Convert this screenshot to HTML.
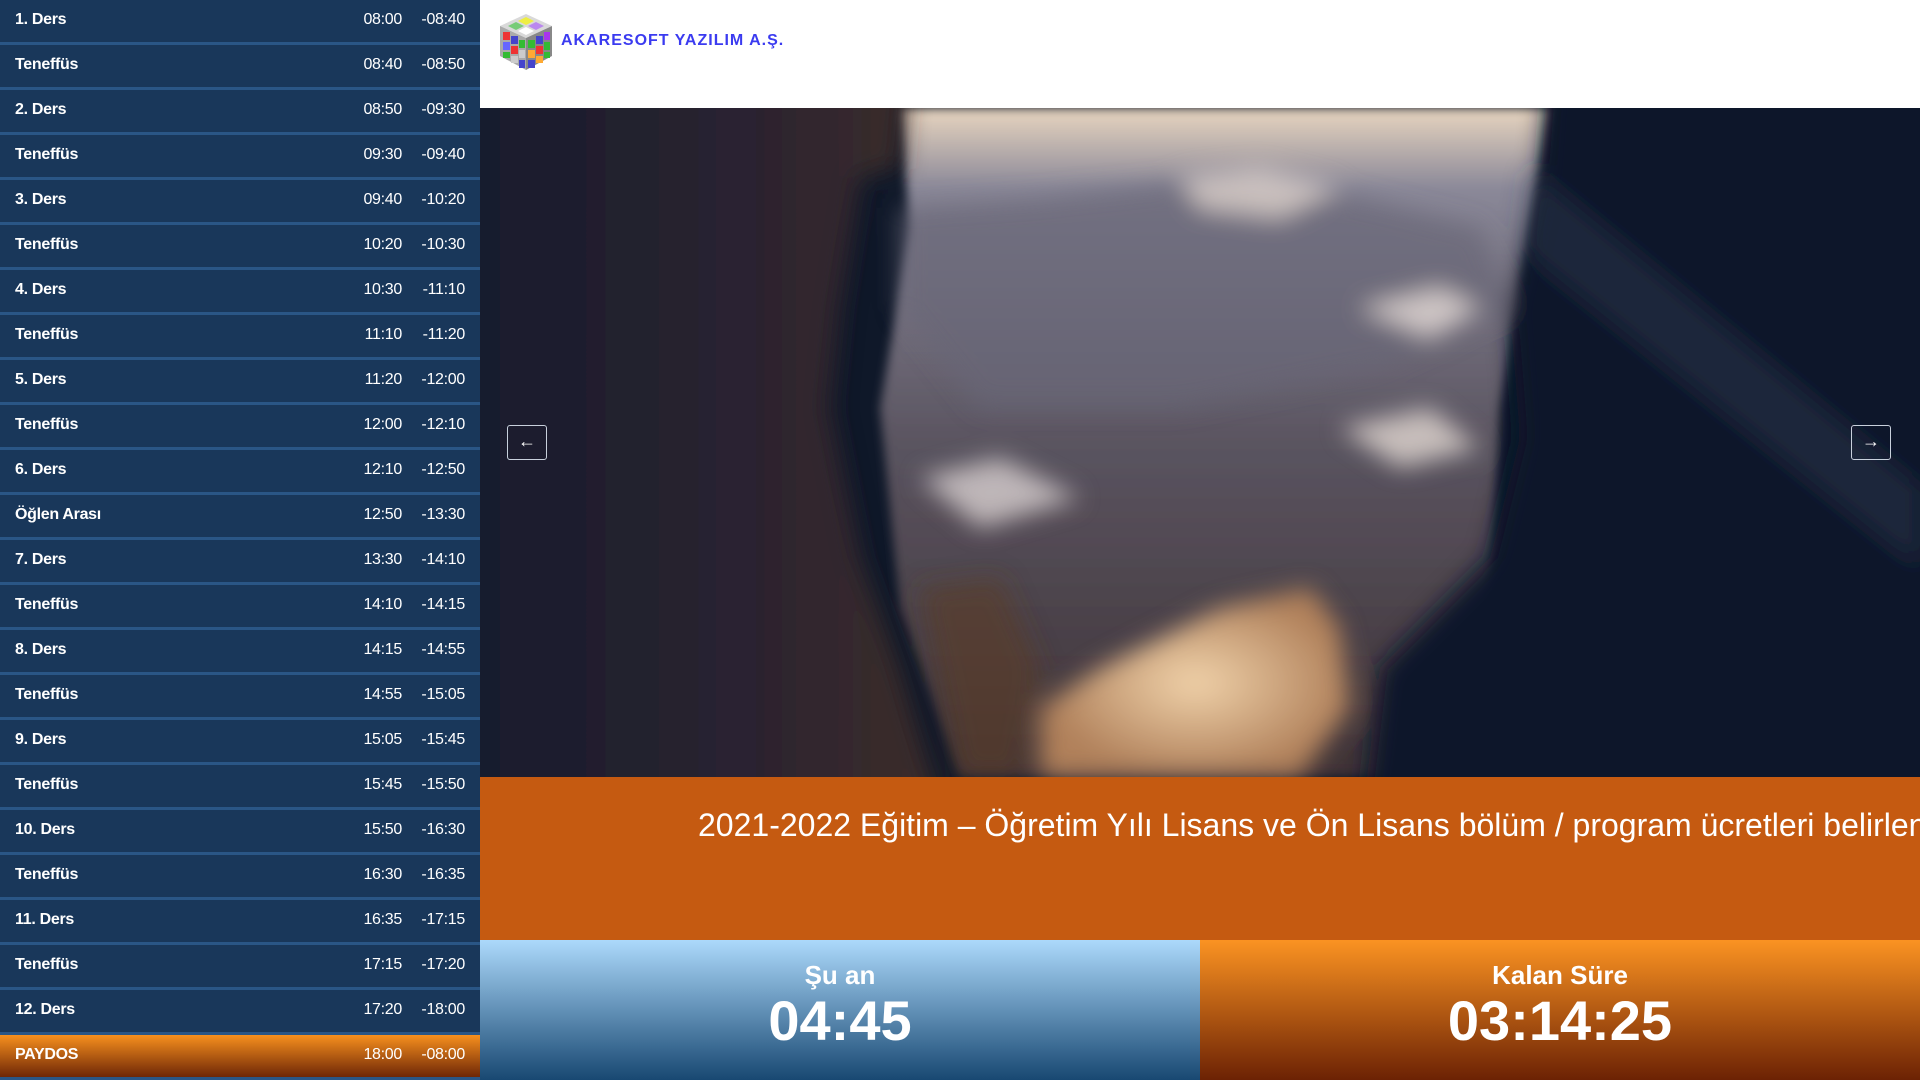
<!DOCTYPE html>
<html><head><meta charset="utf-8"><style>
*{margin:0;padding:0;box-sizing:border-box}
html,body{width:1920px;height:1080px;overflow:hidden;font-family:"Liberation Sans",Arial,sans-serif;background:#fff}
#side{position:absolute;left:0;top:0;width:480px;height:1080px;background:#2a5686}
.row{position:absolute;left:0;width:480px;height:42px;background:#19375a;color:#fff;font-size:16px;letter-spacing:-0.3px}
.row b{position:absolute;left:15px;top:11px}
.row .t1{position:absolute;right:78px;top:11px}
.row .t2{position:absolute;right:15px;top:11px}
.row.p{background:linear-gradient(#f7901e,#6e2606)}
#hdr{position:absolute;left:480px;top:0;width:1440px;height:108px;background:#fff}
#img{position:absolute;left:480px;top:108px;width:1440px;height:669px;overflow:hidden;background:#101a2c}
#band{position:absolute;left:480px;top:777px;width:1440px;height:163px;background:#c55a11;overflow:hidden}
#band span{position:absolute;left:218px;top:30px;white-space:nowrap;color:#fff;font-size:32px;letter-spacing:0}
.pan{position:absolute;top:940px;height:140px;width:720px;color:#fff;text-align:center;font-weight:bold}
.pan .a{position:absolute;top:20px;width:100%;font-size:26px}
.pan .b{position:absolute;top:48px;width:100%;font-size:56px}
.btn{position:absolute;top:317px;width:40px;height:35px;border:1.5px solid #c8d0dc;border-radius:3px;color:#fff;font-size:18px;text-align:center;line-height:31px}
</style></head><body>
<div id="side"></div>
<div id="hdr">
<svg style="position:absolute;left:16px;top:12px" width="60" height="60" viewBox="0 0 60 60">
<polygon points="30,2 56,14 30,26 4,14" fill="#d9d9d9"/>
<polygon points="30,26 56,14 56,44 30,58" fill="#888"/>
<polygon points="4,14 30,26 30,58 4,44" fill="#aaa"/>
<g>
<rect x="7" y="20" width="7" height="8" fill="#e33"/><rect x="15" y="24" width="7" height="8" fill="#44c"/><rect x="23" y="28" width="6" height="8" fill="#3b3"/>
<rect x="7" y="30" width="7" height="8" fill="#66f"/><rect x="15" y="34" width="7" height="8" fill="#e33"/><rect x="23" y="38" width="6" height="8" fill="#ccc"/>
<rect x="7" y="40" width="7" height="6" fill="#3b3"/><rect x="15" y="44" width="7" height="7" fill="#ccc"/><rect x="23" y="48" width="6" height="8" fill="#44c"/>
<rect x="32" y="28" width="7" height="8" fill="#3b3"/><rect x="40" y="24" width="7" height="8" fill="#44c"/><rect x="48" y="20" width="6" height="8" fill="#a3e"/>
<rect x="32" y="38" width="7" height="8" fill="#fa3"/><rect x="40" y="34" width="7" height="8" fill="#e33"/><rect x="48" y="30" width="6" height="8" fill="#3b3"/>
<rect x="32" y="48" width="7" height="8" fill="#44c"/><rect x="40" y="44" width="7" height="7" fill="#fa3"/><rect x="48" y="40" width="6" height="6" fill="#3b3"/>
<polygon points="30,5 38,9 30,13 22,9" fill="#ee4"/><polygon points="40,10 48,14 40,18 32,14" fill="#b8e"/><polygon points="20,10 28,14 20,18 12,14" fill="#7c7"/><polygon points="30,15 38,19 30,23 22,19" fill="#fff"/>
</g></svg>
<div style="position:absolute;left:81px;top:32px;color:#3b3bf0;font-weight:bold;font-size:16px;letter-spacing:1px">AKARESOFT YAZILIM A.Ş.</div>
</div>
<div id="img">
<svg width="1440" height="669" viewBox="0 0 1440 669">
<defs>
<linearGradient id="sky" x1="0" y1="0" x2="0" y2="1"><stop offset="0" stop-color="#e9d6c0"/><stop offset="0.12" stop-color="#8a8898"/><stop offset="0.5" stop-color="#5a5460"/><stop offset="1" stop-color="#3e3236"/></linearGradient>
<radialGradient id="snow" cx="0.5" cy="0.5" r="0.5"><stop offset="0" stop-color="#f0d2aa"/><stop offset="1" stop-color="#b0805a"/></radialGradient>
<linearGradient id="lr" x1="0" y1="0" x2="1" y2="0"><stop offset="0" stop-color="#141c2c"/><stop offset="0.6" stop-color="#2a2230"/><stop offset="1" stop-color="#3e2e2a"/></linearGradient>
<filter id="bl" x="-10%" y="-10%" width="120%" height="120%"><feGaussianBlur stdDeviation="12"/></filter>
<filter id="bl2"><feGaussianBlur stdDeviation="5"/></filter>
</defs>
<rect width="1440" height="669" fill="#0f1829"/>
<g filter="url(#bl2)">
<polygon points="420,0 1070,0 1050,120 1020,300 1010,500 980,669 480,669 420,500 400,300 430,120" fill="url(#sky)"/>
</g>
<g filter="url(#bl)">
<polygon points="420,100 560,90 740,70 880,90 1000,120 1030,200 900,260 700,300 500,300 420,200" fill="#6a6676" opacity=".7"/>
<polygon points="440,370 520,350 600,390 500,420" fill="#d8cfd0" opacity=".8"/>
<polygon points="880,200 960,180 1000,200 950,230" fill="#e6dcd8" opacity=".8"/>
<polygon points="700,70 780,60 860,80 800,110 720,100" fill="#ddd2cc" opacity=".8"/>
<polygon points="860,320 950,300 1000,340 920,360" fill="#e2d8d2" opacity=".8"/>
<polygon points="740,500 830,480 860,520 870,600 820,669 560,669 560,600 620,560" fill="url(#snow)"/>
<polygon points="-60,-60 430,-60 420,60 380,70 360,200 350,300 380,450 420,560 470,730 -60,730" fill="url(#lr)"/>
<polygon points="1500,-60 1070,-60 1060,80 1030,200 1040,330 1010,450 900,560 880,730 1500,730" fill="#0f192b"/>
<polygon points="1050,60 1440,380 1440,460 1040,140" fill="#3a4458" opacity=".35"/>
<polygon points="440,480 520,470 560,560 540,669 480,669" fill="#5a3a24" opacity=".6"/>
</g>
</svg>
<div class="btn" style="left:27px">←</div>
<div class="btn" style="left:1371px">→</div>
</div>
<div id="band"><span>2021-2022 Eğitim – Öğretim Yılı Lisans ve Ön Lisans bölüm / program ücretleri belirlendi.</span></div>
<div class="pan" style="left:480px;background:linear-gradient(#acd9fb,#184872)"><div class="a">Şu an</div><div class="b">04:45</div></div>
<div class="pan" style="left:1200px;background:linear-gradient(#fb9322,#6c2204)"><div class="a">Kalan Süre</div><div class="b">03:14:25</div></div>
<div class="row" style="top:0"><b>1. Ders</b><span class="t1">08:00</span><span class="t2">-08:40</span></div>
<div class="row" style="top:45px"><b>Teneffüs</b><span class="t1">08:40</span><span class="t2">-08:50</span></div>
<div class="row" style="top:90px"><b>2. Ders</b><span class="t1">08:50</span><span class="t2">-09:30</span></div>
<div class="row" style="top:135px"><b>Teneffüs</b><span class="t1">09:30</span><span class="t2">-09:40</span></div>
<div class="row" style="top:180px"><b>3. Ders</b><span class="t1">09:40</span><span class="t2">-10:20</span></div>
<div class="row" style="top:225px"><b>Teneffüs</b><span class="t1">10:20</span><span class="t2">-10:30</span></div>
<div class="row" style="top:270px"><b>4. Ders</b><span class="t1">10:30</span><span class="t2">-11:10</span></div>
<div class="row" style="top:315px"><b>Teneffüs</b><span class="t1">11:10</span><span class="t2">-11:20</span></div>
<div class="row" style="top:360px"><b>5. Ders</b><span class="t1">11:20</span><span class="t2">-12:00</span></div>
<div class="row" style="top:405px"><b>Teneffüs</b><span class="t1">12:00</span><span class="t2">-12:10</span></div>
<div class="row" style="top:450px"><b>6. Ders</b><span class="t1">12:10</span><span class="t2">-12:50</span></div>
<div class="row" style="top:495px"><b>Öğlen Arası</b><span class="t1">12:50</span><span class="t2">-13:30</span></div>
<div class="row" style="top:540px"><b>7. Ders</b><span class="t1">13:30</span><span class="t2">-14:10</span></div>
<div class="row" style="top:585px"><b>Teneffüs</b><span class="t1">14:10</span><span class="t2">-14:15</span></div>
<div class="row" style="top:630px"><b>8. Ders</b><span class="t1">14:15</span><span class="t2">-14:55</span></div>
<div class="row" style="top:675px"><b>Teneffüs</b><span class="t1">14:55</span><span class="t2">-15:05</span></div>
<div class="row" style="top:720px"><b>9. Ders</b><span class="t1">15:05</span><span class="t2">-15:45</span></div>
<div class="row" style="top:765px"><b>Teneffüs</b><span class="t1">15:45</span><span class="t2">-15:50</span></div>
<div class="row" style="top:810px"><b>10. Ders</b><span class="t1">15:50</span><span class="t2">-16:30</span></div>
<div class="row" style="top:855px"><b>Teneffüs</b><span class="t1">16:30</span><span class="t2">-16:35</span></div>
<div class="row" style="top:900px"><b>11. Ders</b><span class="t1">16:35</span><span class="t2">-17:15</span></div>
<div class="row" style="top:945px"><b>Teneffüs</b><span class="t1">17:15</span><span class="t2">-17:20</span></div>
<div class="row" style="top:990px"><b>12. Ders</b><span class="t1">17:20</span><span class="t2">-18:00</span></div>
<div class="row p" style="top:1035px"><b>PAYDOS</b><span class="t1">18:00</span><span class="t2">-08:00</span></div>
</body></html>
